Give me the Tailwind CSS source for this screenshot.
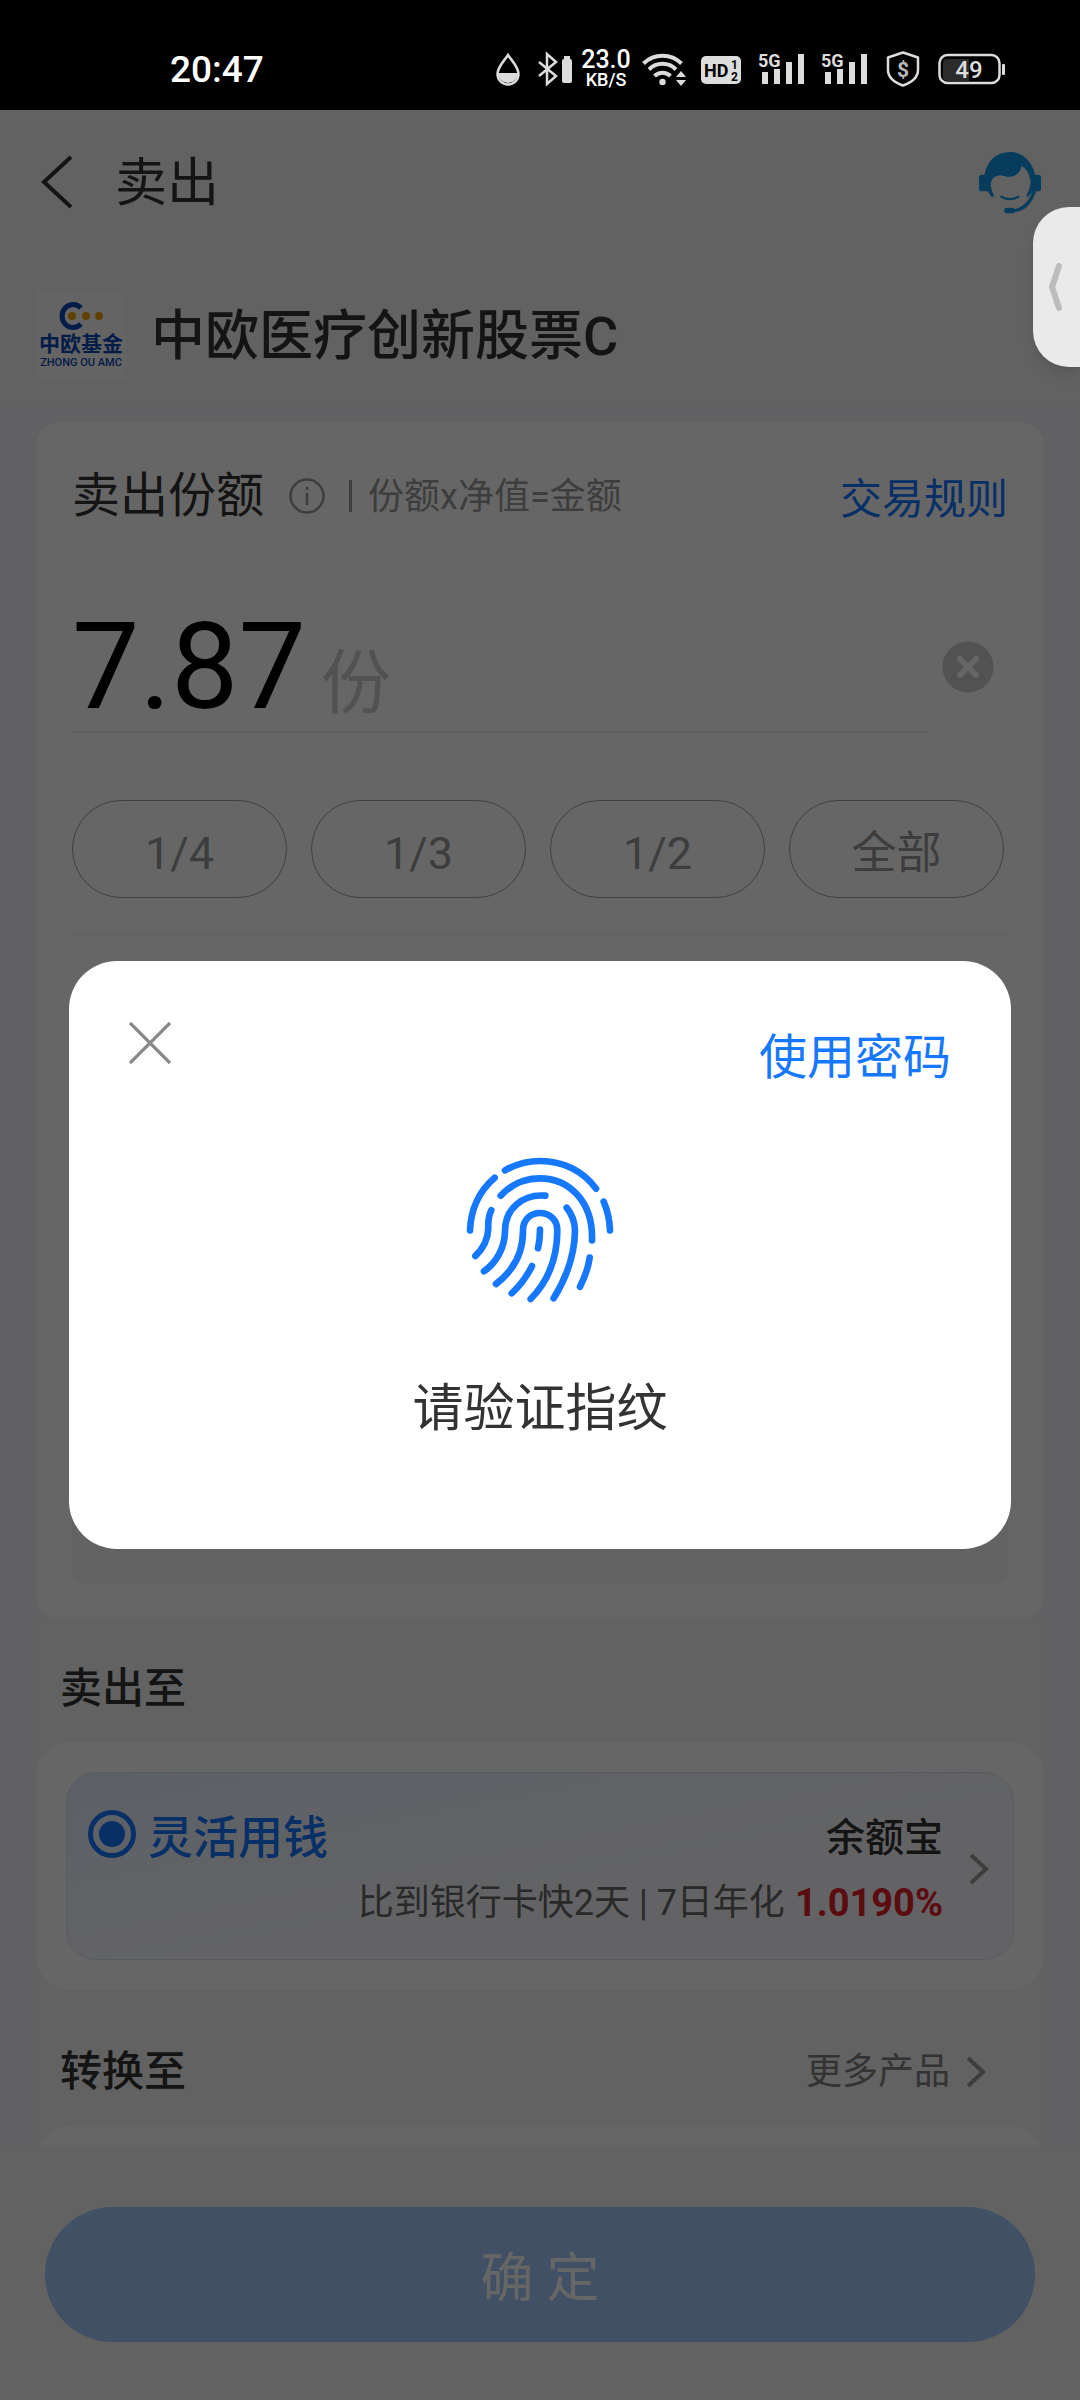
<!DOCTYPE html>
<html lang="zh-CN">
<head>
<meta charset="utf-8">
<meta name="viewport" content="width=device-width, initial-scale=1">
<title>卖出</title>
<script src="https://cdn.jsdelivr.net/npm/@tailwindcss/browser@4"></script>
</head>
<body class="flex min-h-screen flex-col bg-black font-['Roboto','Noto_Sans_CJK_SC',sans-serif] text-[#333]">

<!-- status bar -->
<div class="flex h-[110px] shrink-0 items-center justify-between bg-black pt-7 pr-[75px] pl-[170px] text-[#dcdcdc]">
  <time class="pt-0.5 text-[37px] leading-10 font-medium text-white">20:47</time>
  <div class="flex items-center">
    <svg class="h-9 w-6" viewBox="0 0 24 36" fill="none"><path d="M12 4C8 10 1.500 16 1.500 23a10.500 10.500 0 0 0 21 0C22.500 16 16 10 12 4Z" stroke="currentColor" stroke-width="2.500"/><path d="M2 22h20a10 10 0 0 1-20 0Z" fill="currentColor"/></svg>
    <svg class="ml-[18px] h-9 w-[35px]" viewBox="0 0 35 36" fill="none"><path d="M1 11l17 14-9 8V3l9 8L1 25" stroke="currentColor" stroke-width="2.500"/><rect x="24" y="8" width="10" height="24" rx="2" fill="currentColor"/><rect x="26" y="5" width="6" height="3" fill="currentColor"/></svg>
    <div class="ml-[7px] flex w-[52px] flex-col items-center font-['Roboto'] font-medium text-white">
      <span class="text-[25px] leading-[22px]">23.0</span>
      <span class="text-[18px] leading-[18px]">KB/S</span>
    </div>
    <svg class="ml-[10px] h-9 w-[44px]" viewBox="0 0 44 36" fill="none" stroke="currentColor" stroke-width="4"><path d="M1.500 12.500a27 27 0 0 1 38 0M7 18.500a19 19 0 0 1 27 0M12.500 25a11.500 11.500 0 0 1 16 0"/><circle cx="20.500" cy="31" r="3.200" fill="currentColor" stroke="none"/><path d="M34 26l5-6 5 6ZM34 29l5 6 5-6Z" fill="currentColor" stroke="none"/></svg>
    <svg class="ml-[15px] h-9 w-10" viewBox="0 0 40 36"><rect y="5" width="40" height="28" rx="5" fill="currentColor"/><text x="3" y="26" font-family="Roboto" font-weight="700" font-size="18" fill="#000">HD</text><text x="30" y="18" font-family="Roboto" font-weight="700" font-size="12" fill="#000">1</text><text x="30" y="30" font-family="Roboto" font-weight="700" font-size="12" fill="#000">2</text></svg>
    <svg class="ml-[17px] h-10 w-[48px]" viewBox="0 -2 48 40" fill="currentColor"><text x="0" y="16" font-family="Roboto" font-weight="700" font-size="18">5G</text><rect x="4" y="21" width="6" height="12"/><rect x="16" y="18" width="6" height="15"/><rect x="28" y="11" width="6" height="22"/><rect x="40" y="3" width="6" height="30"/></svg>
    <svg class="ml-[15px] h-10 w-[48px]" viewBox="0 -2 48 40" fill="currentColor"><text x="0" y="16" font-family="Roboto" font-weight="700" font-size="18">5G</text><rect x="4" y="21" width="6" height="12"/><rect x="16" y="18" width="6" height="15"/><rect x="28" y="11" width="6" height="22"/><rect x="40" y="3" width="6" height="30"/></svg>
    <svg class="ml-[17px] h-9 w-[34px]" viewBox="0 0 34 36" fill="none"><path d="M17 1.500L32 6.500V19C32 27 24 32 17 34.500 10 32 2 27 2 19V6.500Z" stroke="currentColor" stroke-width="2.500" stroke-linejoin="round"/><text x="17" y="25.500" text-anchor="middle" font-family="Roboto" font-weight="700" font-size="21" fill="#b8b8b8">$</text></svg>
    <svg class="ml-[18px] h-9 w-[67px]" viewBox="0 0 67 36"><rect x="1.500" y="4" width="60" height="28" rx="8" fill="none" stroke="currentColor" stroke-width="2.500"/><path d="M9 8h22v22H9a4 4 0 0 1-4-4V12a4 4 0 0 1 4-4Z" fill="#2b2b2b"/><text x="31" y="27" text-anchor="middle" font-family="Roboto" font-weight="500" font-size="24" fill="currentColor">49</text><rect x="64" y="13" width="3" height="11" rx="1" fill="currentColor"/></svg>
  </div>
</div>

<div class="relative flex flex-1 flex-col bg-[#f3f3f8]">
  <header class="flex h-[146px] items-center justify-between bg-[#f5f5f5] pr-[39px] pl-10">
    <div class="flex items-center">
      <button type="button" aria-label="返回"><svg class="h-14 w-8" viewBox="0 0 32 56" fill="none" stroke="#333" stroke-width="4"><path d="M31 2L4 27l27 25"/></svg></button>
      <h1 class="ml-[43px] pt-0.5 text-[52px] leading-[60px]">卖出</h1>
    </div>
    <button type="button" aria-label="客服">
      <svg class="size-[62px]" viewBox="0 0 186 186" fill="#1296e8"><path d="M16 68C24 26 54 0 92 0s68 28 76 68h10q8 0 8 8v34q0 8-8 8h-6C158 154 140 178 108 180q-2 4-8 4H84a8 8 0 0 1 0-17h16q5 0 7 4c26-4 42-24 53-50l-14 14q-5-4-2-9c8-14 12-30 10-42-2-18-12-34-26-42-4 22-22 34-42 32-12-1-20-8-32-2C38 76 34 92 36 106q2 12 9 24-4 8-9 3l-10-15H8q-8 0-8-8V76q0-8 8-8Z"/><path d="M67 134q27 15 51 0" stroke="#1296e8" stroke-width="7" stroke-linecap="round" fill="none"/></svg>
    </button>
  </header>

  <div class="flex h-[158px] items-center bg-linear-to-b from-[#f5f5f5] from-80% to-[#f3f3f8] px-9">
    <div class="flex size-[90px] shrink-0 flex-col items-center bg-[#fafafa] pt-3 text-[#0a46b4]">
      <svg class="h-7 w-[46px]" viewBox="0 0 46 28"><path d="M23 6A11 11.500 0 1 0 23 22" fill="none" stroke="#0a46b4" stroke-width="5"/><g fill="#f5a000"><circle cx="14" cy="14" r="4"/><circle cx="28" cy="14" r="4"/><circle cx="41" cy="14" r="4"/></g></svg>
      <span class="mt-1 text-[21px] leading-[21px] font-bold">中欧基金</span>
      <span class="text-[11px] leading-4 font-medium">ZHONG OU AMC</span>
    </div>
    <h2 class="ml-[25px] pt-1 text-[54px] leading-[64px] font-medium">中欧医疗创新股票C</h2>
  </div>

  <section class="mx-9 mt-2 rounded-3xl bg-white p-9">
    <div class="flex h-[76px] items-center justify-between">
      <div class="flex items-center">
        <label for="share" class="text-[48px] leading-[56px]">卖出份额</label>
        <button type="button" aria-label="说明" class="ml-[25px]"><svg class="size-9" viewBox="0 0 36 36" fill="none" stroke="#999" stroke-width="2.500"><circle cx="18" cy="18" r="16.500"/><path d="M18 15v12M18 9v3"/></svg></button>
        <span class="ml-6 h-8 w-[3px] bg-[#999]"></span>
        <span class="ml-4 pt-0.5 text-[36px] leading-10 text-[#999]">份额x净值=金额</span>
      </div>
      <a href="#" class="pt-2 text-[42px] leading-12 text-[#1677ff]">交易规则</a>
    </div>
    <div class="flex h-[199px]">
      <div class="flex flex-1 items-end border-b-2 border-[#ebebeb] pb-1">
        <div class="flex items-baseline">
          <input id="share" type="text" value="7.87" class="h-[120px] w-[249px] bg-transparent text-[120px] leading-[120px] text-black outline-none">
          <span class="text-[70px] leading-[70px] text-[#ccc]">份</span>
        </div>
      </div>
      <button type="button" aria-label="清除" class="flex w-[81px] items-end justify-center pb-10"><svg class="size-[52px]" viewBox="0 0 52 52"><circle cx="26" cy="26" r="25.500" fill="#ccc"/><path d="M18 18l16 16M34 18L18 34" stroke="#fff" stroke-width="6" stroke-linecap="round"/></svg></button>
    </div>
    <div class="mt-[67px] grid grid-cols-4 gap-6 pr-1 text-[45px] leading-[52px] text-[#999]">
      <button type="button" class="h-[98px] rounded-full border border-[#a0a0a0] pt-2.5">1/4</button>
      <button type="button" class="h-[98px] rounded-full border border-[#a0a0a0] pt-2.5">1/3</button>
      <button type="button" class="h-[98px] rounded-full border border-[#a0a0a0] pt-2.5">1/2</button>
      <button type="button" class="h-[98px] rounded-full border border-[#a0a0a0] pt-2.5">全部</button>
    </div>
    <hr class="mt-9 border-[#eee]">
    <div class="mt-[348px] h-[300px] rounded-xl bg-[#f7f7f7]"></div>
  </section>

  <div class="mx-9 bg-[#f5f5f5]">
    <h3 class="flex h-[123px] items-center px-6 pt-4 text-[42px] leading-12 font-medium">卖出至</h3>
    <section class="rounded-[36px] bg-white p-[30px]">
      <div class="flex h-[188px] rounded-[30px] border border-[#dbe4f5] bg-linear-to-br from-[#e6f1ff] to-[#f8f8fc] to-60% pr-6 pl-[21px]">
        <div class="flex-1 pt-8">
          <div class="flex h-[66px] items-center justify-between">
            <div class="flex items-center">
              <input id="flex-cash" type="radio" name="target" checked class="mb-2 size-12 appearance-none rounded-full border-5 border-[#1677ff] bg-[#1677ff] bg-clip-content p-[6px]">
              <label for="flex-cash" class="ml-3 pt-0.5 text-[45px] leading-[52px] font-medium text-[#1677ff]">灵活用钱</label>
            </div>
            <span class="text-[39px] leading-[48px] font-medium">余额宝</span>
          </div>
          <p class="flex h-16 items-center justify-end text-[36px] leading-[48px] text-[#666]">比到银行卡快2天 | 7日年化<strong class="ml-2.5 text-[38px] font-bold text-[#e0202c]">1.0190%</strong></p>
        </div>
        <svg class="mt-20 ml-[26px] h-8 w-5" viewBox="0 0 20 32" fill="none" stroke="#999" stroke-width="4"><path d="M2 2l15 14L2 30"/></svg>
      </div>
    </section>
    <div class="flex h-[135px] items-center justify-between pt-7 pr-[58px] pl-6">
      <h3 class="text-[42px] leading-12 font-medium">转换至</h3>
      <a href="#" class="flex items-center text-[36px] leading-10 text-[#808080]">更多产品<svg class="ml-4 h-8 w-5" viewBox="0 0 20 32" fill="none" stroke="#999" stroke-width="4"><path d="M2 2l15 14L2 30"/></svg></a>
    </div>
    <div class="h-[22px] overflow-hidden"><div class="h-24 rounded-t-[36px] bg-white"></div></div>
  </div>

  <footer class="mt-auto bg-[#f5f5f5] px-[45px] pt-[60px] pb-[58px]">
    <button type="button" class="h-[135px] w-full rounded-full bg-[#a2c8fa] pt-2 text-[53px] leading-[60px] text-white">确 定</button>
  </footer>

  <!-- dimmed layer with the fingerprint dialog -->
  <div class="absolute inset-0 flex items-center justify-center bg-black/60 px-[69px]">
    <div role="dialog" aria-label="请验证指纹" class="w-full rounded-[48px] bg-white px-[60px] pt-[61px] pb-[110px]">
      <div class="flex items-start justify-between">
        <button type="button" aria-label="关闭"><svg class="size-[42px]" viewBox="0 0 44 44" stroke="#888" stroke-width="3.500"><path d="M1 1l42 42M43 1L1 43"/></svg></button>
        <button type="button" class="mt-2 text-[48px] leading-14 text-[#1677ff]">使用密码</button>
      </div>
      <svg class="mx-auto mt-[70px] h-[148px] w-[150px]" viewBox="135 105 450 444" fill="none" stroke="#1677ff" stroke-width="20" stroke-linecap="round"><path d="M255 148Q305 120 360 120C430 120 490 150 528 203M551 242Q568 280 570 328M150 328Q154 230 224 170M242 224C275 188 315 172 360 172C445 172 520 240 516 358M214 268Q203 290 205 322Q203 370 166 405M376 224C310 218 254 262 255 332C254 380 230 424 192 451M228 489C285 445 310 392 309 327C309 296 332 276 360 276C390 276 412 298 412 328C412 410 385 480 332 534M440 260Q464 290 465 328Q464 430 401 532M360 326Q360 356 354 382M336 435Q313 482 275 517M509 410Q503 452 480 497"/></svg>
      <p class="mt-[75px] text-center text-[51px] leading-[60px]">请验证指纹</p>
    </div>
  </div>

  <!-- edge panel handle -->
  <div class="absolute top-[97px] right-0 flex h-[160px] w-[47px] items-center rounded-l-[36px] bg-[#eaeaea] pl-4 shadow-lg">
    <svg class="h-12 w-4" viewBox="0 0 16 48" fill="none" stroke="#bcbcbc" stroke-width="6" stroke-linecap="round" stroke-linejoin="round"><path d="M10 3L3 24l7 21"/></svg>
  </div>
</div>
</body>
</html>
